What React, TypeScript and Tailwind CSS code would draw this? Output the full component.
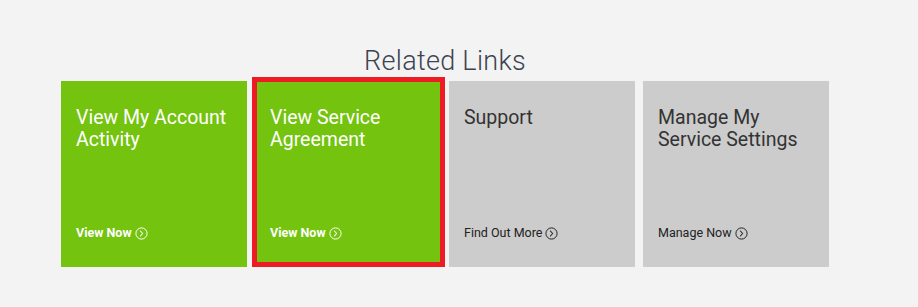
import React from "react";

const font = { fontFamily: "Roboto, 'Liberation Sans', sans-serif" };

function Arrow({ color }: { color: string }) {
  return (
    <svg width="13" height="13" viewBox="0 0 13 13" className="ml-[3px] shrink-0">
      <circle cx="6.5" cy="6.5" r="5.6" fill="none" stroke={color} strokeWidth="1" />
      <path d="M5.4 4 L7.7 6.5 L5.4 9" fill="none" stroke={color} strokeWidth="1.1" strokeLinecap="round" strokeLinejoin="round" />
    </svg>
  );
}

function Card({
  title,
  link,
  green,
  className = "",
}: {
  title: string[];
  link: string;
  green: boolean;
  className?: string;
}) {
  const color = green ? "#ffffff" : "#222222";
  return (
    <div
      className={`flex flex-col justify-between ${green ? "bg-[#73c30f]" : "bg-[#cccccc]"} ${className}`}
    >
      <div
        className={`text-[19.5px] leading-[22px] ${green ? "text-white" : "text-[#333333]"}`}
      >
        {title.map((t) => (
          <div key={t}>{t}</div>
        ))}
      </div>
      <div className={`flex items-center text-[12.5px] ${green ? "font-bold text-white" : "text-[#222222]"}`}>
        <span>{link}</span>
        <Arrow color={color} />
      </div>
    </div>
  );
}

export default function App() {
  return (
    <div className="w-[918px] h-[307px] bg-[#f3f3f3]" style={font}>
      <div className="pt-[45px] pl-[61px] w-[829px]">
        <div className="text-center text-[27px] leading-[32px] font-light text-[#3d4350] tracking-[0.3px]">
          Related Links
        </div>
        <div className="flex items-end">
          <Card
            title={["View My Account", "Activity"]}
            link="View Now"
            green
            className="w-[186px] h-[186px] pt-[26px] pl-[15px] pb-[24px]"
          />
          <div className="ml-[5px] w-[193px] h-[190px] border-[5px] border-[#ed1c24] flex">
            <Card
              title={["View Service", "Agreement"]}
              link="View Now"
              green
              className="flex-1 pt-[25px] pl-[13px] pb-[19px]"
            />
          </div>
          <Card
            title={["Support"]}
            link="Find Out More"
            green={false}
            className="ml-[4px] w-[186px] h-[186px] pt-[26px] pl-[15px] pb-[24px]"
          />
          <Card
            title={["Manage My", "Service Settings"]}
            link="Manage Now"
            green={false}
            className="ml-[8px] w-[186px] h-[186px] pt-[26px] pl-[15px] pb-[24px]"
          />
        </div>
      </div>
    </div>
  );
}
